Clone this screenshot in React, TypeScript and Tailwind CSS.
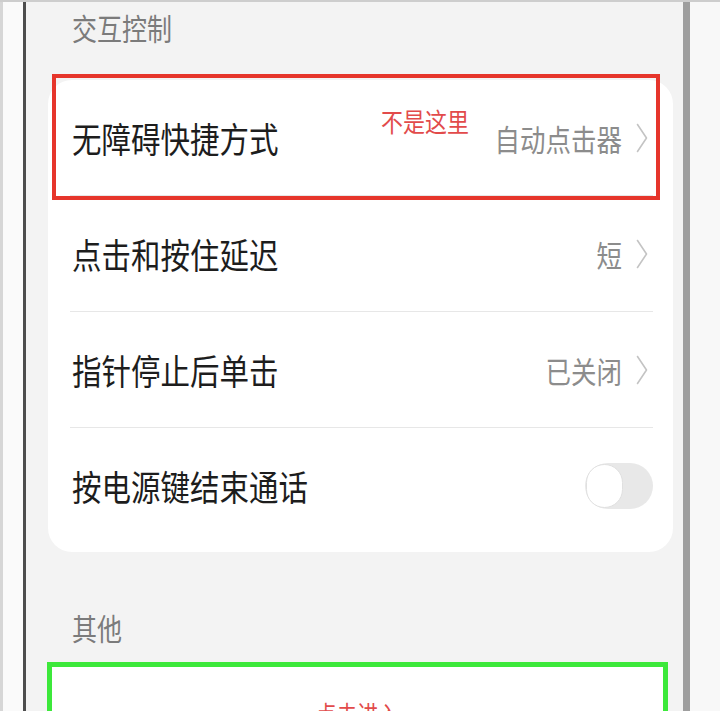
import React from "react";

const Chevron = () => (
  <svg width="12" height="30" viewBox="0 0 12 30" className="ml-[14px] mr-[5px] shrink-0">
    <polyline
      points="1.5,1.5 10.5,15 1.5,28.5"
      fill="none"
      stroke="#c4c4c4"
      strokeWidth="1.6"
      strokeLinecap="round"
      strokeLinejoin="round"
    />
  </svg>
);

const Label = ({ children }: { children: React.ReactNode }) => (
  <span className="inline-block text-[29.5px] leading-[36px] text-[#1d1d1d] scale-y-[1.18] whitespace-nowrap">
    {children}
  </span>
);

const Value = ({ children }: { children: React.ReactNode }) => (
  <span className="inline-block text-[25.5px] leading-[30px] text-[#8c8c8c] scale-y-[1.18] whitespace-nowrap">
    {children}
  </span>
);

const Divider = () => <div className="ml-[22px] mr-[20px] h-px bg-[#e7e7e7]" />;

export default function App() {
  return (
    <div className="w-[720px] h-[711px] overflow-hidden flex border-t-2 border-[#cdcdcd] bg-[#f9f9f9] font-['Noto_Sans_CJK_SC','Noto_Sans',sans-serif]">
      <div className="w-[3px] shrink-0 bg-[#d6d6d6]" />
      <div className="w-[20px] shrink-0 bg-[#fafafa]" />
      <div className="w-[3px] shrink-0 bg-[#4d4d4d]" />
      <main className="w-[657px] shrink-0 bg-[#f3f3f3] pl-[22px] pr-[10px]">
        <div className="h-[78px] pl-[24px] pt-[10px]">
          <span className="inline-block text-[25px] leading-[30px] text-[#7b7b7b] scale-y-[1.18]">交互控制</span>
        </div>

        <div className="rounded-[24px] bg-white pb-[9px]">
          <div className="relative flex h-[115px] items-center pl-[24px] pr-[20px]">
            <Label>无障碍快捷方式</Label>
            <div className="ml-auto flex items-center">
              <Value>自动点击器</Value>
              <Chevron />
            </div>
            <div className="pointer-events-none absolute left-[4px] right-[13px] top-[-6px] bottom-[-5px] border-[4px] border-[#e6352b]" />
            <span className="absolute left-[333px] top-[29px] inline-block text-[22px] leading-[22px] text-[#e24b4b] scale-y-[1.18] whitespace-nowrap">
              不是这里
            </span>
          </div>
          <Divider />
          <div className="flex h-[115px] items-center pl-[24px] pr-[20px]">
            <Label>点击和按住延迟</Label>
            <div className="ml-auto flex items-center">
              <Value>短</Value>
              <Chevron />
            </div>
          </div>
          <Divider />
          <div className="flex h-[115px] items-center pl-[24px] pr-[20px]">
            <Label>指针停止后单击</Label>
            <div className="ml-auto flex items-center">
              <Value>已关闭</Value>
              <Chevron />
            </div>
          </div>
          <Divider />
          <div className="flex h-[115px] items-center pl-[24px] pr-[20px]">
            <Label>按电源键结束通话</Label>
            <div className="ml-auto flex h-[46px] w-[68px] items-center rounded-full bg-[#e8e8e8] p-[1px]">
              <div className="h-[44px] w-[37px] rounded-full border border-[#e0e0e0] bg-white" />
            </div>
          </div>
        </div>

        <div className="h-[110px] pl-[24px] pt-[60px]">
          <span className="inline-block text-[25px] leading-[30px] text-[#7b7b7b] scale-y-[1.18]">其他</span>
        </div>

        <div className="ml-[-1px] h-[80px] w-[621px] border-[5px] border-[#3ce83a] bg-white pt-[34px] text-center">
          <span className="inline-block text-[21px] leading-[24px] text-[#e24b4b] scale-y-[1.18]">点击进入</span>
        </div>
      </main>
      <div className="w-[7px] shrink-0 bg-[#9e9e9e]" />
      <div className="flex-1 bg-[#f8f8f8]" />
    </div>
  );
}
